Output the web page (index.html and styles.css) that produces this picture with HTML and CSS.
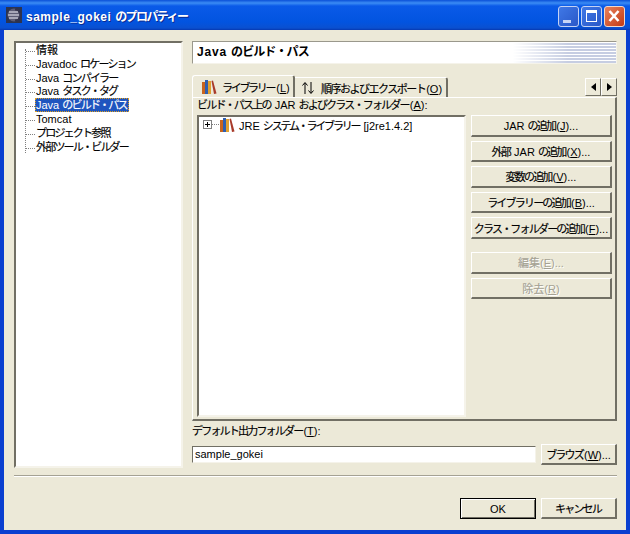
FILE: index.html
```html
<!DOCTYPE html>
<html lang="ja">
<head>
    <meta charset="UTF-8">
    <title>sample_gokei のプロパティー</title>
    <link rel="stylesheet" href="styles.css">
</head>
<body>
    <div class="window">
        <div class="titlebar">
            <svg class="app-icon" width="16" height="16" viewBox="0 0 16 16">
                <rect width="16" height="16" fill="#2c3450"/>
                <circle cx="8" cy="8" r="6.5" fill="#5c5c74"/>
                <path d="M9 2.5a5.5 5.5 0 0 1 0 11" fill="none" stroke="#33334a" stroke-width="2"/>
                <path d="M3 5h9M2 8h11M3 11h9" stroke="#f0f0f8" stroke-width="1.2"/>
            </svg>
            <span class="title-text">sample_gokei <span class="jp-bold">のプロパティー</span></span>
            <div class="win-buttons">
                <div class="win-btn"><span class="min-glyph"></span></div>
                <div class="win-btn"><span class="max-glyph"></span></div>
                <div class="win-btn close">
                    <svg width="21" height="21" viewBox="0 0 21 21"><path d="M5.5 5l9 10M14.5 5l-9 10" stroke="#fff" stroke-width="2.6"/></svg>
                </div>
            </div>
        </div>

        <div class="client">
            <div class="main">
                <div class="nav-tree">
                    <ul class="nav-list">
                        <li><span class="jp kanji">情報</span></li>
                        <li>Javadoc <span class="jp">ロケーション</span></li>
                        <li>Java <span class="jp">コンパイラー</span></li>
                        <li>Java <span class="jp">タスク・タグ</span></li>
                        <li><span class="selected">Java <span class="jp">のビルド・パス</span></span></li>
                        <li>Tomcat</li>
                        <li><span class="jp">プロジェクト参照</span></li>
                        <li><span class="jp">外部ツール・ビルダー</span></li>
                    </ul>
                </div>

                <div class="right">
                    <div class="page-title">Java <span class="jp-bold">のビルド・パス</span></div>

                    <div class="tab-row">
                        <div class="tab active">
                            <svg class="lib-icon" width="16" height="16" viewBox="0 0 16 16">
                                <rect x="1" y="3" width="3" height="12" fill="#c8641e"/>
                                <rect x="4" y="1" width="3" height="14" fill="#2f5fb0"/>
                                <rect x="7" y="2" width="3" height="13" fill="#e0a030"/>
                                <path d="M10.5 2l1.5-.5 3.5 13-2.5.5z" fill="#a83a2a"/>
                            </svg>
                            <span><span class="jp">ライブラリー</span>(<u>L</u>)</span>
                        </div>
                        <div class="tab second">
                            <svg width="14" height="14" viewBox="0 0 14 14"><path d="M4 13V2M1.5 4.5L4 1.5l2.5 3M10 1v11M7.5 9.5l2.5 3 2.5-3" fill="none" stroke="#000" stroke-width="1"/></svg>
                            <span><span class="jp">順序およびエクスポート</span>(<u>O</u>)</span>
                        </div>
                        <div class="tab-arrows">
                            <div class="arrow-btn"><span class="tri-left"></span></div>
                            <div class="arrow-btn"><span class="tri-right"></span></div>
                        </div>
                    </div>

                    <div class="tab-panel">
                        <div class="panel-label"><span class="jp">ビルド・パス上の</span> JAR <span class="jp">およびクラス・フォルダー</span>(<u>A</u>):</div>
                        <div class="panel-body">
                            <div class="jar-tree">
                                <div class="jar-row">
                                    <span class="plus-box"></span>
                                    <span class="dots"></span>
                                    <svg class="lib-icon" width="16" height="16" viewBox="0 0 16 16">
                                        <rect x="1" y="3" width="3" height="12" fill="#c8641e"/>
                                        <rect x="4" y="1" width="3" height="14" fill="#2f5fb0"/>
                                        <rect x="7" y="2" width="3" height="13" fill="#e0a030"/>
                                        <path d="M10.5 2l1.5-.5 3.5 13-2.5.5z" fill="#a83a2a"/>
                                    </svg>
                                    <span class="jar-text">JRE <span class="jp">システム・ライブラリー</span> [j2re1.4.2]</span>
                                </div>
                            </div>
                            <div class="side-buttons">
                                <div class="btn"><span>JAR <span class="jp">の追加</span>(<u>J</u>)...</span></div>
                                <div class="btn"><span><span class="jp">外部</span> JAR <span class="jp">の追加</span>(<u>X</u>)...</span></div>
                                <div class="btn"><span><span class="jp">変数の追加</span>(<u>V</u>)...</span></div>
                                <div class="btn"><span><span class="jp">ライブラリーの追加</span>(<u>B</u>)...</span></div>
                                <div class="btn"><span><span class="jp">クラス・フォルダーの追加</span>(<u>F</u>)...</span></div>
                                <div class="btn disabled first-disabled"><span><span class="jp kanji">編集</span>(<u>E</u>)...</span></div>
                                <div class="btn disabled"><span><span class="jp kanji">除去</span>(<u>R</u>)</span></div>
                            </div>
                        </div>
                    </div>

                    <div class="output-label"><span class="jp">デフォルト出力フォルダー</span>(<u>T</u>):</div>
                    <div class="output-row">
                        <div class="text-input">sample_gokei</div>
                        <div class="btn browse"><span><span class="jp">ブラウズ</span>(<u>W</u>)...</span></div>
                    </div>
                </div>
            </div>

            <div class="separator"></div>

            <div class="dialog-buttons">
                <div class="btn dialog default">OK</div>
                <div class="btn dialog"><span class="jp">キャンセル</span></div>
            </div>
        </div>
    </div>
</body>
</html>
```

FILE: styles.css
```css
/* XP style dialog */
* {
    margin: 0;
    padding: 0;
    box-sizing: border-box;
}
body {
    width: 630px;
    height: 534px;
    overflow: hidden;
    font-family: "Liberation Sans", "Noto Sans CJK JP", sans-serif;
    font-size: 11px;
    color: #000;
    background: #ece9d8;
}
/* the original font has narrow kana */
.jp {
    letter-spacing: -1.8px;
    margin-right: 1px;
    -webkit-text-stroke: 0.15px;
}
.jp.kanji {
    letter-spacing: 0;
    margin-right: 0;
}
.jp-bold {
    letter-spacing: -1.6px;
}
.window {
    width: 630px;
    height: 534px;
    display: flex;
    flex-direction: column;
    background: #0a3fd0;
}
.titlebar {
    height: 30px;
    flex: none;
    display: flex;
    align-items: center;
    padding: 0 5px 0 6px;
    background: linear-gradient(to bottom, #0a50d8 0, #3b8cf4 3px, #0a5ae8 6px, #0254e0 22px, #0a50d0 28px, #0638b0 30px);
}
.app-icon {
    flex: none;
}
.title-text {
    margin-left: 4px;
    font-size: 12px;
    font-weight: bold;
    letter-spacing: 0.5px;
    color: #fff;
    text-shadow: 1px 1px 0 #0a2a90;
}
.win-buttons {
    margin-left: auto;
    margin-top: 2px;
    display: flex;
    gap: 2px;
}
.win-btn {
    width: 21px;
    height: 21px;
    border: 1px solid #c4d2f4;
    border-radius: 3px;
    background: linear-gradient(135deg, #3f78e6, #2a58c8);
    position: relative;
}
.win-btn.close {
    border-color: #f0d8cc;
    background: linear-gradient(135deg, #e8815c, #c23a14);
}
.win-btn.close svg {
    position: absolute;
    left: -1px;
    top: -1px;
}
.min-glyph {
    position: absolute;
    left: 4px;
    bottom: 3px;
    width: 8px;
    height: 3px;
    background: #c8d6f6;
}
.max-glyph {
    position: absolute;
    left: 4px;
    top: 3px;
    width: 11px;
    height: 12px;
    border: 1px solid #fff;
    border-top-width: 3px;
}
.client {
    flex: 1;
    margin: 0 4px 4px;
    padding: 11px 9px 0 10px;
    background: #ece9d8;
    display: flex;
    flex-direction: column;
}
.main {
    display: flex;
    gap: 9px;
    height: 427px;
}
.nav-tree {
    width: 169px;
    flex: none;
    background: #fff;
    border: 2px solid;
    border-color: #716f64 #f5f3ea #f5f3ea #716f64;
}
.nav-list {
    list-style: none;
    border-left: 1px dotted #808080;
    margin: 6px 0 0 9px;
    height: 104px;
}
.nav-list li {
    height: 13.8px;
    line-height: 14px;
    padding-left: 10px;
    white-space: nowrap;
    position: relative;
    top: -6px;
}
.nav-list li::before {
    content: "";
    position: absolute;
    left: 0;
    top: 8px;
    width: 9px;
    border-top: 1px dotted #808080;
}
.selected {
    display: inline-block;
    height: 14px;
    padding: 0 1px;
    margin-left: -1px;
    color: #fff;
    background: #1f55bf;
    outline: 1px dotted #e0a020;
    outline-offset: -1px;
}
.right {
    width: 425px;
    flex: none;
    display: flex;
    flex-direction: column;
}
.page-title {
    height: 23px;
    flex: none;
    font-size: 12px;
    font-weight: bold;
    letter-spacing: 0.8px;
    line-height: 20px;
    padding-left: 4px;
    border: 1px solid;
    border-color: #9a988c #f5f3ea #f5f3ea #9a988c;
    background-color: #fff;
    background-image:
        linear-gradient(to right, #fff 320px, rgba(255, 255, 255, 0) 375px),
        repeating-linear-gradient(to bottom, #fff 0, #fff 1px, #c6cde2 1px, #c6cde2 3px);
}
.page-title .jp-bold {
    letter-spacing: -0.9px;
}
.tab-row {
    height: 22px;
    margin-top: 11px;
    flex: none;
    display: flex;
    align-items: flex-end;
}
.tab {
    display: flex;
    align-items: center;
    white-space: nowrap;
    background: #ece9d8;
}
.tab.active {
    width: 103px;
    height: 22px;
    gap: 5px;
    padding-left: 8px;
    border: 1px solid #fff;
    border-bottom: none;
    border-right: 2px solid #716f64;
    border-radius: 3px 3px 0 0;
}
.tab.active .jp {
    letter-spacing: -2.3px;
    margin-right: 2px;
}
.tab.second {
    width: 153px;
    height: 20px;
    padding-left: 6px;
    gap: 6px;
    border-right: 2px solid #716f64;
    border-top: 1px solid #fff;
    border-radius: 0 3px 0 0;
}
.tab.second .jp {
    letter-spacing: -1.5px;
}
.tab-arrows {
    margin-left: auto;
    display: flex;
    margin-bottom: 1px;
}
.arrow-btn {
    width: 16px;
    height: 18px;
    display: flex;
    align-items: center;
    justify-content: center;
    border: 1px solid;
    border-color: #fff #716f64 #716f64 #fff;
}
.tri-left {
    border: 4px solid transparent;
    border-left: 0;
    border-right: 5px solid #000;
}
.tri-right {
    border: 4px solid transparent;
    border-right: 0;
    border-left: 5px solid #000;
}
.tab-panel {
    height: 324px;
    flex: none;
    border: 1px solid;
    border-color: #fff #716f64 #716f64 #fff;
    border-width: 1px 2px 2px 1px;
    padding: 0 3px 0 4px;
}
.panel-label {
    height: 17px;
    line-height: 14px;
    white-space: nowrap;
}
.panel-body {
    display: flex;
    gap: 5px;
}
.jar-tree {
    width: 269px;
    height: 302px;
    flex: none;
    background: #fff;
    border: 2px solid;
    border-color: #716f64 #f5f3ea #f5f3ea #716f64;
}
.jar-row {
    display: flex;
    align-items: center;
    height: 15px;
    padding-left: 4px;
}
.plus-box {
    width: 9px;
    height: 9px;
    flex: none;
    border: 1px solid #808080;
    background:
        linear-gradient(#000, #000) center / 5px 1px no-repeat,
        linear-gradient(#000, #000) center / 1px 5px no-repeat,
        #fff;
}
.dots {
    width: 7px;
    flex: none;
    border-top: 1px dotted #808080;
}
.jar-text {
    margin-left: 4px;
    white-space: nowrap;
}
.jar-text .jp {
    letter-spacing: -2.2px;
}
.side-buttons {
    width: 141px;
    flex: none;
    display: flex;
    flex-direction: column;
    gap: 4px;
}
.btn {
    height: 21.6px;
    flex: none;
    display: flex;
    align-items: center;
    justify-content: center;
    white-space: nowrap;
    border: 1px solid;
    border-color: #fff #716f64 #716f64 #fff;
    border-width: 1px 2px 2px 1px;
}
.btn.disabled {
    color: #a5a294;
    text-shadow: 1px 1px 0 #fff;
}
.first-disabled {
    margin-top: 9px;
}
.output-label {
    height: 20px;
    margin-top: 3px;
    line-height: 14px;
    flex: none;
}
.output-row {
    display: flex;
    align-items: center;
    justify-content: space-between;
    height: 21px;
}
.text-input {
    width: 344px;
    height: 17px;
    line-height: 15px;
    padding-left: 2px;
    background: #fff;
    border: 1px solid;
    border-color: #716f64 #f5f3ea #f5f3ea #716f64;
}
.browse {
    width: 76px;
    height: 21px;
}
.separator {
    margin-top: 7px;
    height: 2px;
    flex: none;
    border-top: 1px solid #a5a294;
    border-bottom: 1px solid #fff;
}
.dialog-buttons {
    display: flex;
    justify-content: flex-end;
    gap: 5px;
    margin-top: 21px;
}
.dialog {
    width: 76px;
    height: 21px;
}
.dialog.default {
    border: 1px solid #000;
    box-shadow: inset 1px 1px 0 #fff, inset -1px -1px 0 #716f64;
}
```
